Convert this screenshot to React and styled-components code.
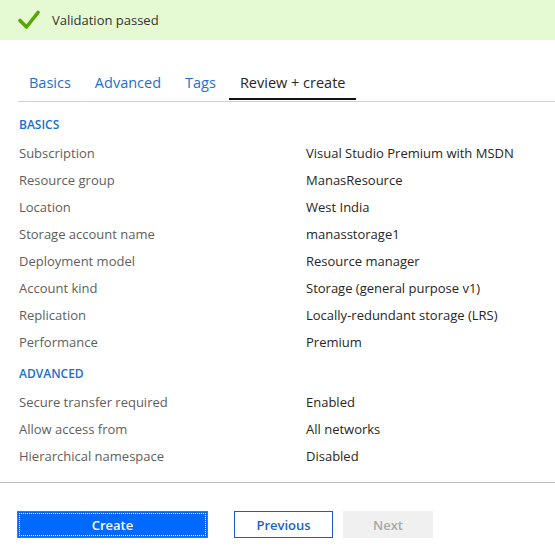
import React from "react";
import styled, { createGlobalStyle } from "styled-components";

const GlobalStyle = createGlobalStyle`
  body {
    margin: 0;
    background: #ffffff;
    font-family: "Open Sans", "Noto Sans", sans-serif;
  }
`;

const Page = styled.div`
  width: 555px;
  height: 558px;
  display: flex;
  flex-direction: column;
  overflow: hidden;
`;

const Banner = styled.div`
  height: 40px;
  background: #e5fad3;
  display: flex;
  align-items: center;
  padding-left: 18px;
  gap: 12px;
  font-size: 13px;
  color: #323232;
`;

const Tabs = styled.div`
  display: flex;
  margin: 32px 0 0 18px;
  border-bottom: 1px solid #d0d0d0;
  gap: 2px;
`;

const Tab = styled.div`
  padding: 0 11px 4px;
  font-size: 14.5px;
  line-height: 22px;
  color: ${({ active }) => (active ? "#262626" : "#1e6fd0")};
  border-bottom: 2px solid ${({ active }) => (active ? "#111" : "transparent")};
  margin-bottom: 1px;
`;

const Body = styled.div`
  padding: 15px 0 0 19px;
  flex: 1;
`;

const SectionTitle = styled.div`
  font-size: 12px;
  font-weight: 600;
  color: #1a6fd0;
  line-height: 16px;
  margin-bottom: 7px;
`;

const Row = styled.div`
  display: grid;
  grid-template-columns: 287px 1fr;
  font-size: 13px;
  line-height: 27px;
`;

const Label = styled.div`
  color: #5e5e5e;
`;

const Value = styled.div`
  color: #262626;
`;

const Section = styled.div`
  margin-bottom: ${({ last }) => (last ? "0" : "10px")};
`;

const Footer = styled.div`
  border-top: 1px solid #bcbcbc;
  height: 76px;
  display: flex;
  align-items: flex-start;
  padding: 28px 0 0 17px;
  box-sizing: border-box;
`;

const Button = styled.button`
  height: 27px;
  font-family: inherit;
  font-size: 13px;
  font-weight: 600;
  box-sizing: border-box;
  padding: 0;
  cursor: pointer;
`;

const PrimaryButton = styled(Button)`
  width: 191px;
  background: #0069ff;
  color: #ffffff;
  border: 1px solid #0f88f0;
  outline: 1px dotted #ffffff;
  outline-offset: -3px;
  margin-right: 26px;
`;

const SecondaryButton = styled(Button)`
  width: 99px;
  background: #ffffff;
  color: #1a5fc8;
  border: 1px solid #1a5fc8;
  margin-right: 10px;
`;

const DisabledButton = styled(Button)`
  width: 90px;
  background: #f0f0f0;
  color: #a8a8a8;
  border: none;
`;

const Check = () => (
  <svg width="22" height="20" viewBox="0 0 22 20">
    <path d="M2 10.5 L8.5 17 L20 2.5" fill="none" stroke="#5aa600" strokeWidth="3.6" strokeLinecap="round" strokeLinejoin="round" />
  </svg>
);

const basics = [
  ["Subscription", "Visual Studio Premium with MSDN"],
  ["Resource group", "ManasResource"],
  ["Location", "West India"],
  ["Storage account name", "manasstorage1"],
  ["Deployment model", "Resource manager"],
  ["Account kind", "Storage (general purpose v1)"],
  ["Replication", "Locally-redundant storage (LRS)"],
  ["Performance", "Premium"],
];

const advanced = [
  ["Secure transfer required", "Enabled"],
  ["Allow access from", "All networks"],
  ["Hierarchical namespace", "Disabled"],
];

export default function App() {
  return (
    <Page>
      <GlobalStyle />
      <Banner>
        <Check />
        <span>Validation passed</span>
      </Banner>
      <Tabs>
        <Tab>Basics</Tab>
        <Tab>Advanced</Tab>
        <Tab>Tags</Tab>
        <Tab active>Review + create</Tab>
      </Tabs>
      <Body>
        <Section>
          <SectionTitle>BASICS</SectionTitle>
          {basics.map(([k, v]) => (
            <Row key={k}>
              <Label>{k}</Label>
              <Value>{v}</Value>
            </Row>
          ))}
        </Section>
        <Section last>
          <SectionTitle>ADVANCED</SectionTitle>
          {advanced.map(([k, v]) => (
            <Row key={k}>
              <Label>{k}</Label>
              <Value>{v}</Value>
            </Row>
          ))}
        </Section>
      </Body>
      <Footer>
        <PrimaryButton>Create</PrimaryButton>
        <SecondaryButton>Previous</SecondaryButton>
        <DisabledButton disabled>Next</DisabledButton>
      </Footer>
    </Page>
  );
}
